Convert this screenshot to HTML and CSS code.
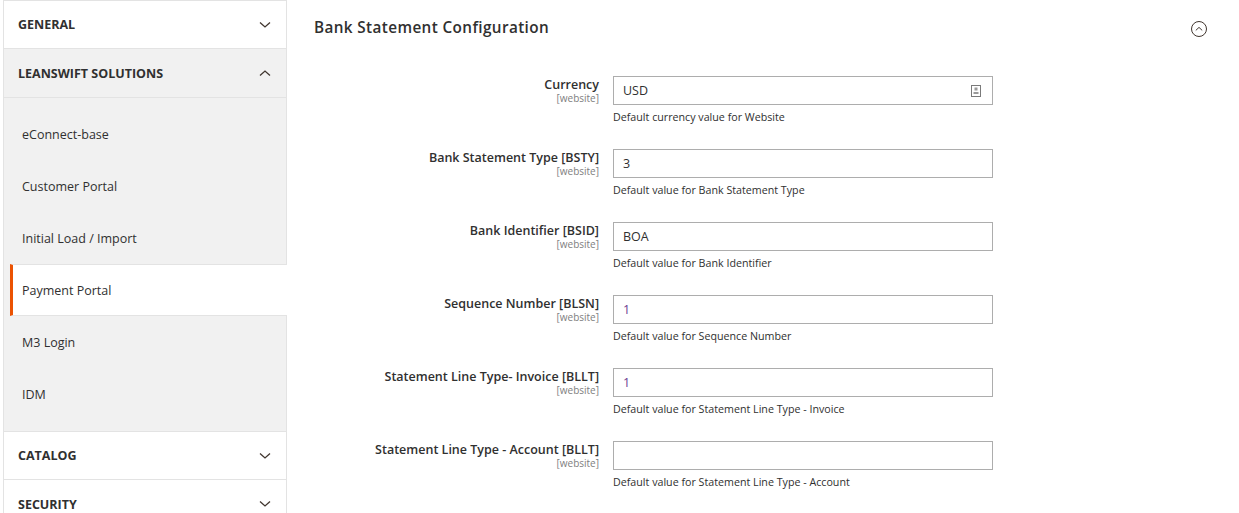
FILE: index.html
```html
<!DOCTYPE html>
<html>
<head>
<meta charset="utf-8">
<link rel="stylesheet" href="styles.css">
</head>
<body>
<div class="page">
  <aside class="nav">
    <div class="nav-title">GENERAL<svg class="chev" viewBox="0 0 12 8"><path d="M1 1.5 L6 6 L11 1.5" /></svg></div>
    <div class="nav-group open">
      <div class="nav-title">LEANSWIFT SOLUTIONS<svg class="chev" viewBox="0 0 12 8"><path d="M1 6.5 L6 2 L11 6.5" /></svg></div>
      <ul class="nav-items">
        <li class="nav-item">eConnect-base</li>
        <li class="nav-item">Customer Portal</li>
        <li class="nav-item">Initial Load / Import</li>
        <li class="nav-item active">Payment Portal</li>
        <li class="nav-item">M3 Login</li>
        <li class="nav-item">IDM</li>
      </ul>
    </div>
    <div class="nav-title">CATALOG<svg class="chev" viewBox="0 0 12 8"><path d="M1 1.5 L6 6 L11 1.5" /></svg></div>
    <div class="nav-title">SECURITY<svg class="chev" viewBox="0 0 12 8"><path d="M1 1.5 L6 6 L11 1.5" /></svg></div>
  </aside>
  <main class="main">
    <div class="section-head">
      <h2 class="section-title">Bank Statement Configuration</h2>
      <svg class="collapse" viewBox="0 0 18 18"><circle cx="9" cy="9" r="7.5" /><path d="M5.8 10.4 L9 7.4 L12.2 10.4" /></svg>
    </div>
    <div class="form">
      <div class="row">
        <div class="label"><span class="label-text">Currency</span><span class="scope">[website]</span></div>
        <div class="control">
          <div class="input select"><span>USD</span>
            <svg class="sel-icon" viewBox="0 0 10 12"><rect x="0.5" y="0.5" width="9" height="11" /><rect x="3.5" y="2.5" width="3" height="3" class="fill" /><rect x="2.5" y="7" width="5" height="2" class="fill" /></svg>
          </div>
          <div class="note">Default currency value for Website</div>
        </div>
      </div>
      <div class="row">
        <div class="label"><span class="label-text">Bank Statement Type [BSTY]</span><span class="scope">[website]</span></div>
        <div class="control">
          <div class="input"><span>3</span></div>
          <div class="note">Default value for Bank Statement Type</div>
        </div>
      </div>
      <div class="row">
        <div class="label"><span class="label-text">Bank Identifier [BSID]</span><span class="scope">[website]</span></div>
        <div class="control">
          <div class="input"><span>BOA</span></div>
          <div class="note">Default value for Bank Identifier</div>
        </div>
      </div>
      <div class="row">
        <div class="label"><span class="label-text">Sequence Number [BLSN]</span><span class="scope">[website]</span></div>
        <div class="control">
          <div class="input"><span class="num">1</span></div>
          <div class="note">Default value for Sequence Number</div>
        </div>
      </div>
      <div class="row">
        <div class="label"><span class="label-text">Statement Line Type- Invoice [BLLT]</span><span class="scope">[website]</span></div>
        <div class="control">
          <div class="input"><span class="num">1</span></div>
          <div class="note">Default value for Statement Line Type - Invoice</div>
        </div>
      </div>
      <div class="row">
        <div class="label"><span class="label-text">Statement Line Type - Account [BLLT]</span><span class="scope">[website]</span></div>
        <div class="control">
          <div class="input"><span></span></div>
          <div class="note">Default value for Statement Line Type - Account</div>
        </div>
      </div>
    </div>
  </main>
</div>
</body>
</html>
```

FILE: styles.css
```css
* { box-sizing: border-box; }
html, body { margin: 0; padding: 0; background: #fff; }
body {
  font-family: "Open Sans", "Liberation Sans", sans-serif;
  color: #303030;
  width: 1239px;
  height: 513px;
  overflow: hidden;
}
.page {
  display: flex;
  align-items: flex-start;
}
.nav {
  width: 284px;
  margin-left: 3px;
  border-left: 1px solid #e3e3e3;
  border-right: 1px solid #e3e3e3;
  border-top: 1px solid #e3e3e3;
  flex-shrink: 0;
}
.nav-title {
  height: 48px;
  display: flex;
  align-items: center;
  justify-content: space-between;
  padding: 0 15px 0 14px;
  font-size: 12.5px;
  font-weight: 700;
  color: #303030;
  border-bottom: 1px solid #e3e3e3;
  background: #fff;
}
.nav-title + .nav-title { height: 49px; }
.chev {
  width: 12px;
  height: 8px;
  fill: none;
  stroke: #41362f;
  stroke-width: 1.3;
}
.nav-group.open { background: #f1f1f1; }
.nav-group.open .nav-title {
  background: #f1f1f1;
  height: 49px;
}
.nav-items {
  list-style: none;
  margin: 0;
  padding: 10px 0 11px 6px;
  border-bottom: 1px solid #e3e3e3;
}
.nav-item {
  height: 52px;
  display: flex;
  align-items: center;
  padding-left: 12px;
  font-size: 12.5px;
  color: #303030;
}
.nav-item.active {
  background: #fff;
  border-left: 3px solid #eb5202;
  border-top: 1px solid #e3e3e3;
  border-bottom: 1px solid #e3e3e3;
  padding-left: 9px;
  margin-right: -1px;
  position: relative;
  z-index: 1;
}
.main {
  flex: 1;
}
.section-head {
  display: flex;
  align-items: center;
  justify-content: space-between;
  height: 54px;
  padding: 0 31px 0 27px;
}
.collapse { margin-top: 4px; }
.section-title {
  margin: 0;
  font-size: 15.3px;
  font-weight: 600;
  letter-spacing: 0.025em;
  color: #303030;
}
.collapse {
  width: 18px;
  height: 18px;
  fill: none;
  stroke: #41362f;
  stroke-width: 1;
}
.form {
  padding-top: 22px;
}
.row {
  display: flex;
  height: 73px;
}
.label {
  width: 312px;
  display: flex;
  flex-direction: column;
  align-items: flex-end;
  padding-top: 0;
}
.label-text {
  font-size: 12.5px;
  font-weight: 600;
  line-height: 17px;
  color: #303030;
}
.scope {
  font-size: 10px;
  line-height: 10px;
  color: #808080;
}
.control {
  margin-left: 14px;
  width: 380px;
}
.input {
  height: 29px;
  border: 1px solid #adadad;
  display: flex;
  align-items: center;
  justify-content: space-between;
  padding: 0 11px 0 9px;
  font-size: 12.5px;
  color: #303030;
  background: #fff;
}
.input .num { color: #6b3a91; }
.sel-icon {
  width: 10px;
  height: 12px;
  fill: none;
  stroke: #7a7a7a;
  stroke-width: 1;
}
.sel-icon .fill { fill: #9a9a9a; stroke: none; }
.note {
  margin-top: 5px;
  font-size: 10.7px;
  line-height: 14px;
  color: #303030;
}
```
